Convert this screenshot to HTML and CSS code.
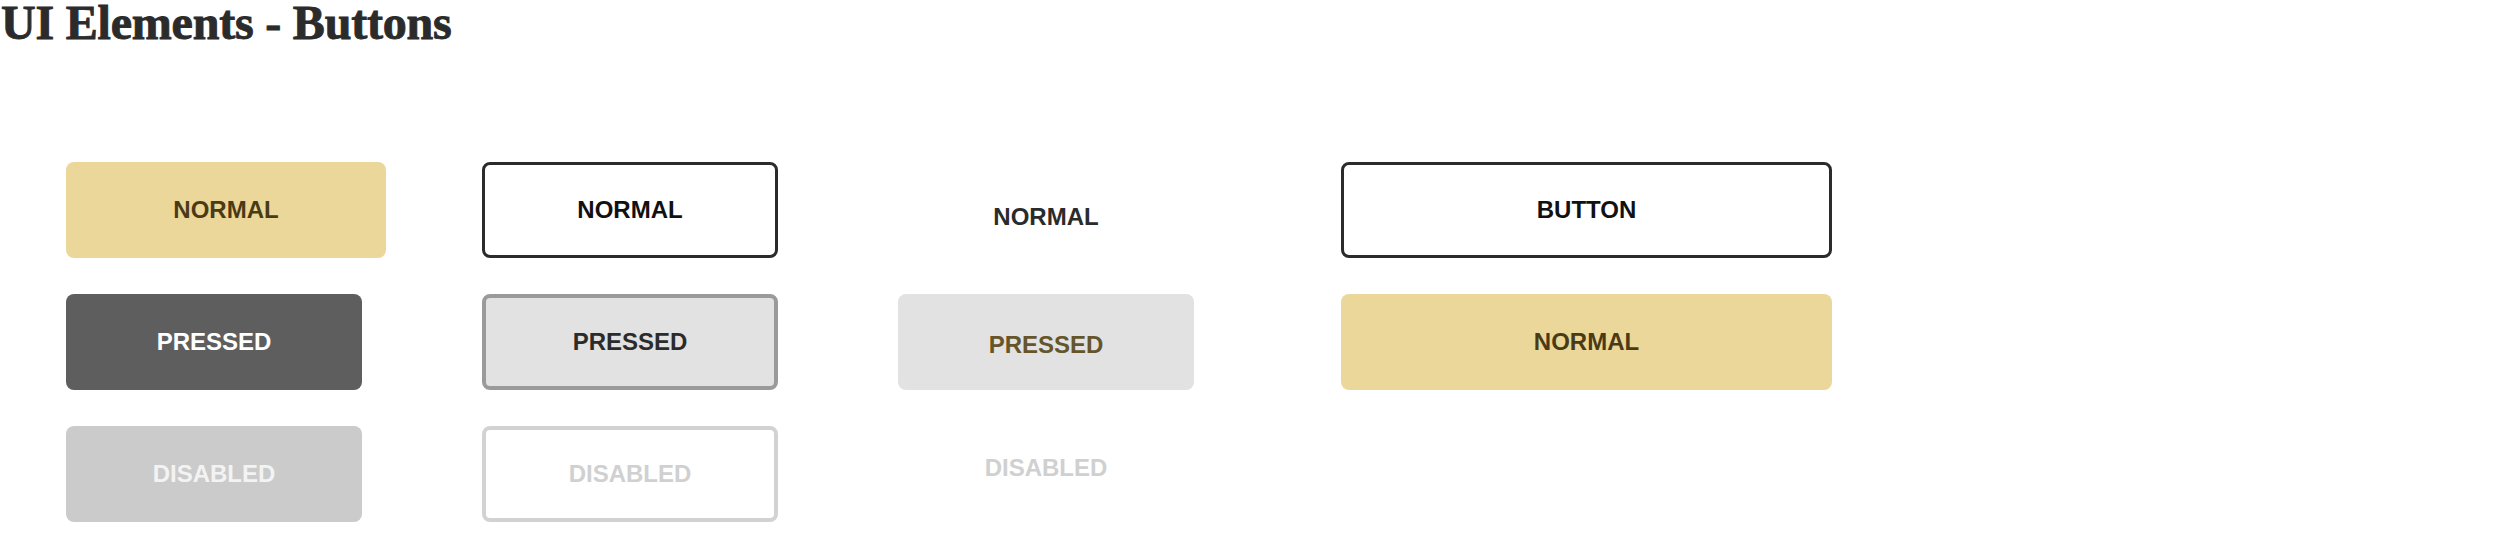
FILE: index.html
```html
<!DOCTYPE html>
<html>
<head>
<meta charset="utf-8">
<link rel="stylesheet" href="styles.css">
</head>
<body>
<h1 class="title">UI Elements - Buttons</h1>
<div class="board">
  <div class="col col-filled">
    <div class="btn gold">NORMAL</div>
    <div class="btn dark">PRESSED</div>
    <div class="btn grey">DISABLED</div>
  </div>
  <div class="col col-outline">
    <div class="btn outline">NORMAL</div>
    <div class="btn outline pressed">PRESSED</div>
    <div class="btn outline disabled">DISABLED</div>
  </div>
  <div class="col col-text">
    <div class="btn text t-normal">NORMAL</div>
    <div class="btn text t-pressed">PRESSED</div>
    <div class="btn text t-disabled">DISABLED</div>
  </div>
  <div class="col col-wide">
    <div class="btn outline wide">BUTTON</div>
    <div class="btn gold wide">NORMAL</div>
  </div>
</div>
</body>
</html>
```
FILE: styles.css
```css
html, body {
  margin: 0;
  padding: 0;
  background: #ffffff;
}

.title {
  margin: 0;
  padding: 0 0 0 1px;
  font-family: "Liberation Serif", "Times New Roman", serif;
  font-weight: 700;
  font-size: 48px;
  line-height: 46px;
  letter-spacing: -0.2px;
  color: #2b2b2b;
  -webkit-text-stroke: 0.9px #2b2b2b;
}

.board {
  display: grid;
  grid-template-columns: 416px 416px 443px 491px;
  padding: 116px 0 0 66px;
}

.col {
  display: flex;
  flex-direction: column;
  gap: 36px;
}

.btn {
  box-sizing: border-box;
  height: 96px;
  width: 296px;
  display: flex;
  align-items: center;
  justify-content: center;
  font-family: "Liberation Sans", Arial, sans-serif;
  font-weight: 700;
  font-size: 24px;
  line-height: 1;
  border-radius: 8px;
}

.gold {
  background: #ecd79a;
  color: #4a3b16;
}

.col-filled .gold {
  width: 320px;
}

.dark {
  background: #5e5e5e;
  color: #ffffff;
}

.grey {
  background: #cbcbcb;
  color: #f3f3f3;
}

.outline {
  background: #ffffff;
  border: 3px solid #2b2b2b;
  color: #111111;
}

.outline.pressed {
  background: #e2e2e2;
  border: 4px solid #9a9a9a;
  color: #2b2b2b;
}

.outline.disabled {
  border: 4px solid #d2d2d2;
  color: #d0d0d0;
}

.text {
  background: transparent;
  color: #2b2b2b;
}

.t-normal {
  padding-top: 14px;
}

.t-pressed {
  background: #e2e2e2;
  color: #66542a;
  padding-top: 6px;
}

.t-disabled {
  color: #d0d0d0;
  padding-bottom: 12px;
}

.wide {
  width: 491px;
}
```
